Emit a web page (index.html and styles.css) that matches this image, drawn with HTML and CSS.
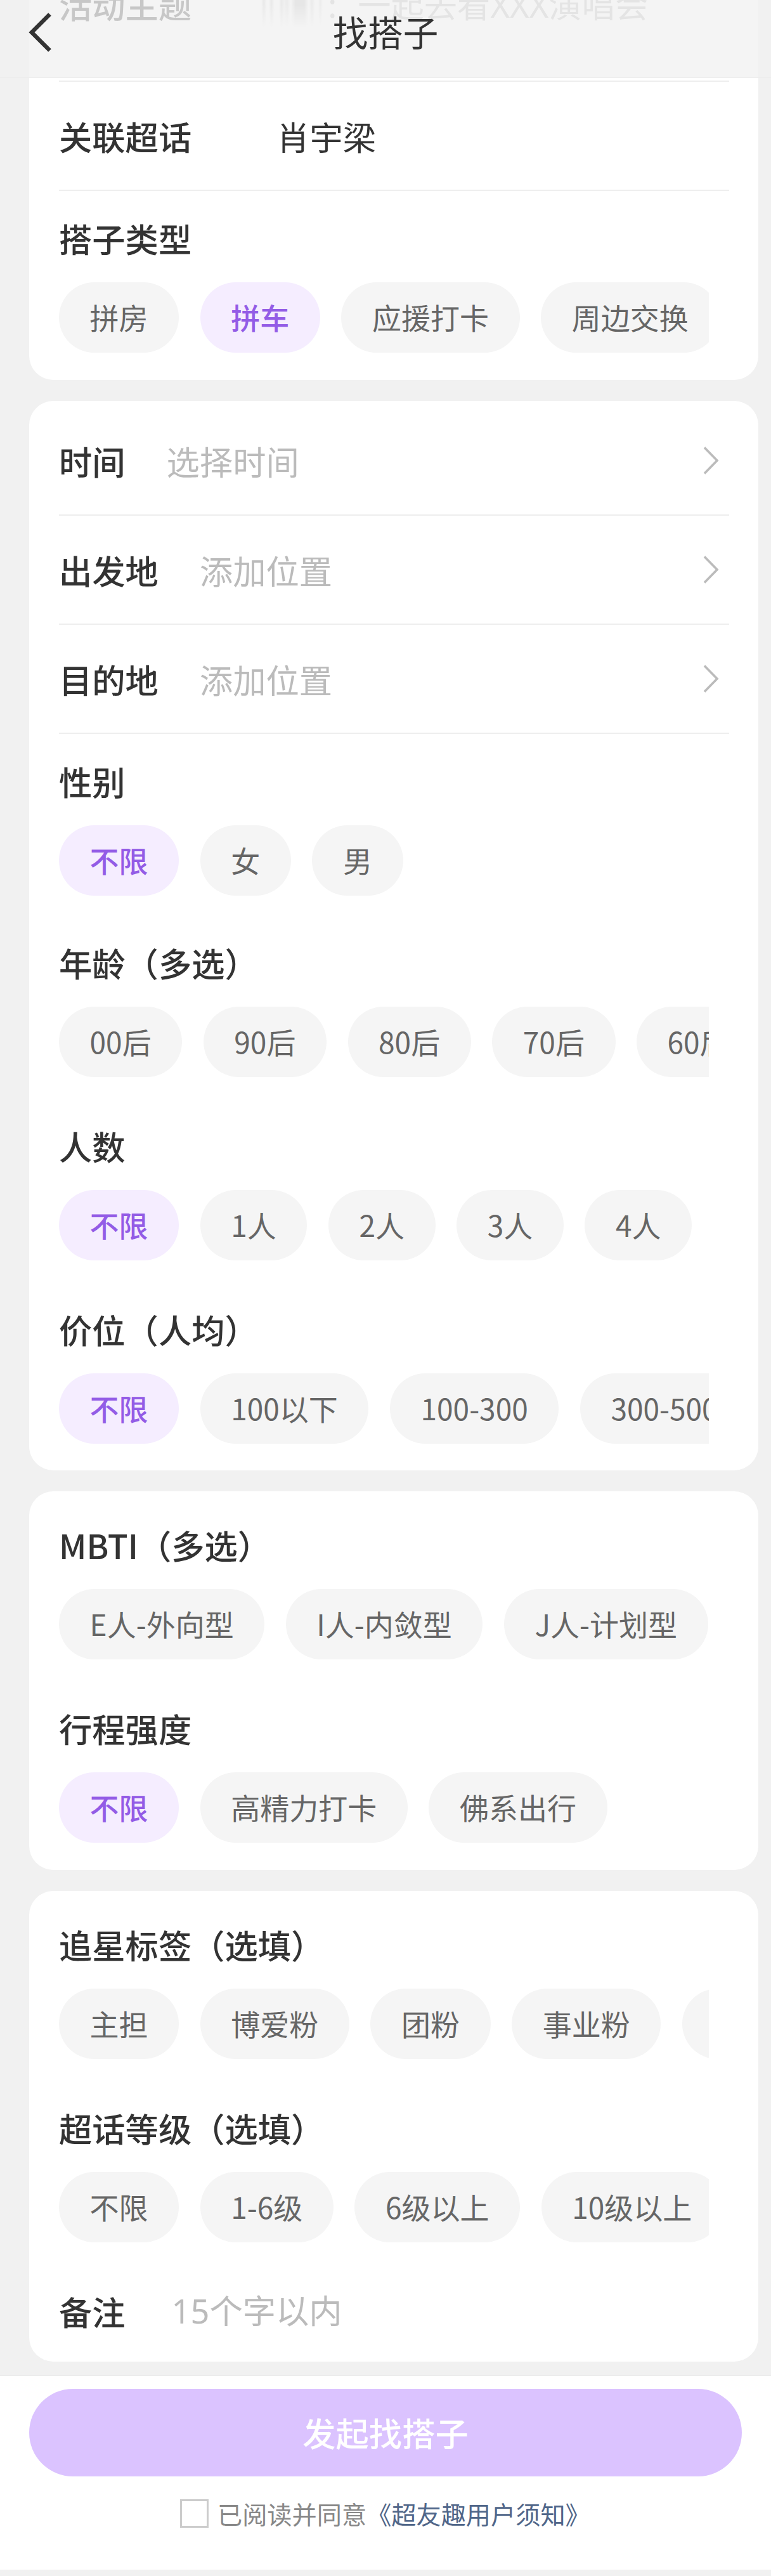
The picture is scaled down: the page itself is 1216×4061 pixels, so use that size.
FILE: index.html
```html
<!DOCTYPE html>
<html lang="zh-CN">
<head>
    <meta charset="UTF-8">
    <meta name="viewport" content="width=device-width, initial-scale=1.0">
    <title>找搭子</title>
    <link rel="stylesheet" href="styles.css">
</head>
<body>
    <header class="navbar">
        <svg class="back" viewBox="0 0 40 66" fill="none" stroke="#333" stroke-width="6.5">
            <path d="M34.5 4.5 L6 33 L34.5 61.5"/>
        </svg>
        <h1>找搭子</h1>
    </header>

    <main class="content">
        <section class="card">
            <div class="row row-theme">
                <span class="label">活动主题</span>
                <span class="example"><i class="smudge"></i><span class="colon">:</span>一起去看XXX演唱会</span>
            </div>
            <div class="row">
                <span class="label">关联超话</span>
                <span class="value">肖宇梁</span>
            </div>
            <div class="group">
                <h2 class="label">搭子类型</h2>
                <div class="chips">
                    <span class="chip">拼房</span>
                    <span class="chip active">拼车</span>
                    <span class="chip">应援打卡</span>
                    <span class="chip">周边交换</span>
                </div>
            </div>
        </section>

        <section class="card">
            <div class="row row-first">
                <span class="label">时间</span>
                <span class="placeholder">选择时间</span>
                <svg class="arrow" viewBox="0 0 26 44" fill="none" stroke="#bbb" stroke-width="3.6"><path d="M3 1.5 L23 22 L3 42.5"/></svg>
            </div>
            <div class="row">
                <span class="label">出发地</span>
                <span class="placeholder">添加位置</span>
                <svg class="arrow" viewBox="0 0 26 44" fill="none" stroke="#bbb" stroke-width="3.6"><path d="M3 1.5 L23 22 L3 42.5"/></svg>
            </div>
            <div class="row">
                <span class="label">目的地</span>
                <span class="placeholder">添加位置</span>
                <svg class="arrow" viewBox="0 0 26 44" fill="none" stroke="#bbb" stroke-width="3.6"><path d="M3 1.5 L23 22 L3 42.5"/></svg>
            </div>
            <div class="group">
                <h2 class="label">性别</h2>
                <div class="chips">
                    <span class="chip active">不限</span>
                    <span class="chip">女</span>
                    <span class="chip">男</span>
                </div>
            </div>
            <div class="group group-age">
                <h2 class="label">年龄（多选）</h2>
                <div class="chips">
                    <span class="chip">00后</span>
                    <span class="chip">90后</span>
                    <span class="chip">80后</span>
                    <span class="chip">70后</span>
                    <span class="chip">60后</span>
                </div>
            </div>
            <div class="group">
                <h2 class="label">人数</h2>
                <div class="chips">
                    <span class="chip active">不限</span>
                    <span class="chip">1人</span>
                    <span class="chip">2人</span>
                    <span class="chip">3人</span>
                    <span class="chip">4人</span>
                </div>
            </div>
            <div class="group">
                <h2 class="label">价位（人均）</h2>
                <div class="chips">
                    <span class="chip active">不限</span>
                    <span class="chip">100以下</span>
                    <span class="chip">100-300</span>
                    <span class="chip">300-500</span>
                </div>
            </div>
        </section>

        <section class="card">
            <div class="group">
                <h2 class="label">MBTI（多选）</h2>
                <div class="chips">
                    <span class="chip">E人-外向型</span>
                    <span class="chip">I人-内敛型</span>
                    <span class="chip">J人-计划型</span>
                </div>
            </div>
            <div class="group">
                <h2 class="label">行程强度</h2>
                <div class="chips">
                    <span class="chip active">不限</span>
                    <span class="chip">高精力打卡</span>
                    <span class="chip">佛系出行</span>
                </div>
            </div>
        </section>

        <section class="card">
            <div class="group">
                <h2 class="label">追星标签（选填）</h2>
                <div class="chips">
                    <span class="chip">主担</span>
                    <span class="chip">博爱粉</span>
                    <span class="chip">团粉</span>
                    <span class="chip">事业粉</span>
                    <span class="chip chip-next"></span>
                </div>
            </div>
            <div class="group">
                <h2 class="label">超话等级（选填）</h2>
                <div class="chips">
                    <span class="chip">不限</span>
                    <span class="chip">1-6级</span>
                    <span class="chip">6级以上</span>
                    <span class="chip">10级以上</span>
                </div>
            </div>
            <div class="remark">
                <span class="label">备注</span>
                <input class="remark-input" type="text" maxlength="15" placeholder="15个字以内">
            </div>
        </section>
    </main>

    <footer class="footer">
        <button class="submit" type="button">发起找搭子</button>
        <div class="agree">
            <span class="checkbox"></span>
            <span>已阅读并同意</span><a class="link">《超友趣用户须知》</a>
        </div>
    </footer>
</body>
</html>
```
FILE: styles.css
```css
* {
    box-sizing: border-box;
}

body {
    margin: 0;
    height: 4061px;
    overflow: hidden;
    background-color: #f1f1f1;
    color: #333;
    font-family: "Noto Sans CJK SC", sans-serif;
    font-size: 52.3px;
}

.navbar {
    position: fixed;
    top: 0;
    left: 0;
    z-index: 10;
    width: 100%;
    height: 123px;
    display: flex;
    justify-content: center;
    border-bottom: 1px solid #ececec;
    background-color: rgba(241, 241, 241, 0.76);
}

.navbar h1 {
    margin: 0;
    font-size: 55.5px;
    font-weight: 400;
    line-height: 99px;
}

.back {
    position: absolute;
    left: 44px;
    top: 18px;
    width: 40px;
    height: 66px;
}

/* page is scrolled, the first row sits under the navbar */
.content {
    margin-top: -44px;
    padding: 0 20px 0 46px;
}

.card {
    margin-bottom: 33px;
    padding: 0 46px 42.5px 47px;
    border-radius: 38px;
    background-color: #fff;
    overflow: hidden;
}

.row {
    height: 172px;
    display: flex;
    align-items: center;
    border-bottom: 2px solid #eee;
}

.row-first {
    height: 181px;
    padding-top: 10px;
}

.row-theme {
    height: 173px;
    padding-bottom: 72px;
}

.row-theme .label {
    color: #444;
}

.label {
    margin: 0;
    font-size: 52.3px;
    font-weight: 500;
    line-height: 78px;
    white-space: nowrap;
}

.example {
    display: flex;
    margin-left: 110px;
    margin-top: 5px;
    color: #bbb;
    font-family: "Noto Sans", "Noto Sans CJK SC", sans-serif;
    line-height: 78px;
    white-space: nowrap;
}

/* blurred out name */
.smudge {
    width: 105px;
    height: 76px;
    background: linear-gradient(to right, #fff 0, #d0d0d0 4px, #fff 9px, #fff 12px, #d0d0d0 16px, #fff 21px, #fff 28px, #d0d0d0 32px, #eee 36px, #d8d8d8 41px, #fff 46px, #c4c4c4 54px, #c4c4c4 68px, #fff 75px, #d8d8d8 80px, #fff 85px, #fff 90px, #ddd 93px, #fff 97px);
    -webkit-mask-image: linear-gradient(to bottom, #000 50%, transparent);
    mask-image: linear-gradient(to bottom, #000 50%, transparent);
}

.colon {
    width: 47px;
}

.value {
    margin-left: 134px;
}

.placeholder {
    margin-left: 65px;
    color: #bbb;
}

.arrow {
    width: 26px;
    height: 44px;
    margin-left: auto;
    margin-right: 16px;
}

.group {
    height: 255px;
    padding-top: 35px;
}

.group:first-child {
    height: 265px;
    padding-top: 45px;
}

.group + .group {
    height: 289px;
    padding-top: 69px;
}

.group + .group-age {
    height: 286px;
    padding-top: 66px;
}

.chips {
    display: flex;
    gap: 33.5px;
    margin-top: 31px;
    margin-right: 32px;
    overflow: hidden;
}

.chip {
    flex-shrink: 0;
    height: 111px;
    padding: 0 48.6px;
    border-radius: 56px;
    background-color: #f5f5f5;
    color: #666;
    font-size: 46px;
    line-height: 108px;
    white-space: nowrap;
}

.chip.active {
    background-color: #f5edff;
    color: #935ce6;
    font-weight: 500;
}

.chip-next {
    width: 189px;
}

.remark {
    height: 146px;
    display: flex;
    align-items: flex-start;
    padding-top: 69px;
}

.remark-input {
    width: 700px;
    height: 78px;
    margin: 0 0 0 73px;
    padding: 0;
    border: none;
    background: none;
    font-family: "Noto Sans", "Noto Sans CJK SC", sans-serif;
    font-size: 52.3px;
}

.remark-input::placeholder {
    color: #bbb;
}

.footer {
    position: fixed;
    top: 3745px;
    left: 0;
    width: 100%;
    height: 306px;
    padding: 20px 46px 0;
    border-top: 1px solid #e6e6e6;
    background-color: #fff;
}

.submit {
    display: block;
    width: 100%;
    height: 138px;
    padding: 0 0 3px;
    border: none;
    border-radius: 69px;
    background-color: #dbc3ff;
    color: #fff;
    font-family: inherit;
    font-size: 52.3px;
    font-weight: 500;
}

.agree {
    display: flex;
    align-items: center;
    height: 58px;
    margin-top: 29px;
    padding-left: 238px;
    color: #888;
    font-size: 39.2px;
    line-height: 58px;
}

.checkbox {
    width: 45px;
    height: 45px;
    margin-right: 14px;
    border: 3px solid #ccc;
}

.link {
    color: #506689;
}
```
